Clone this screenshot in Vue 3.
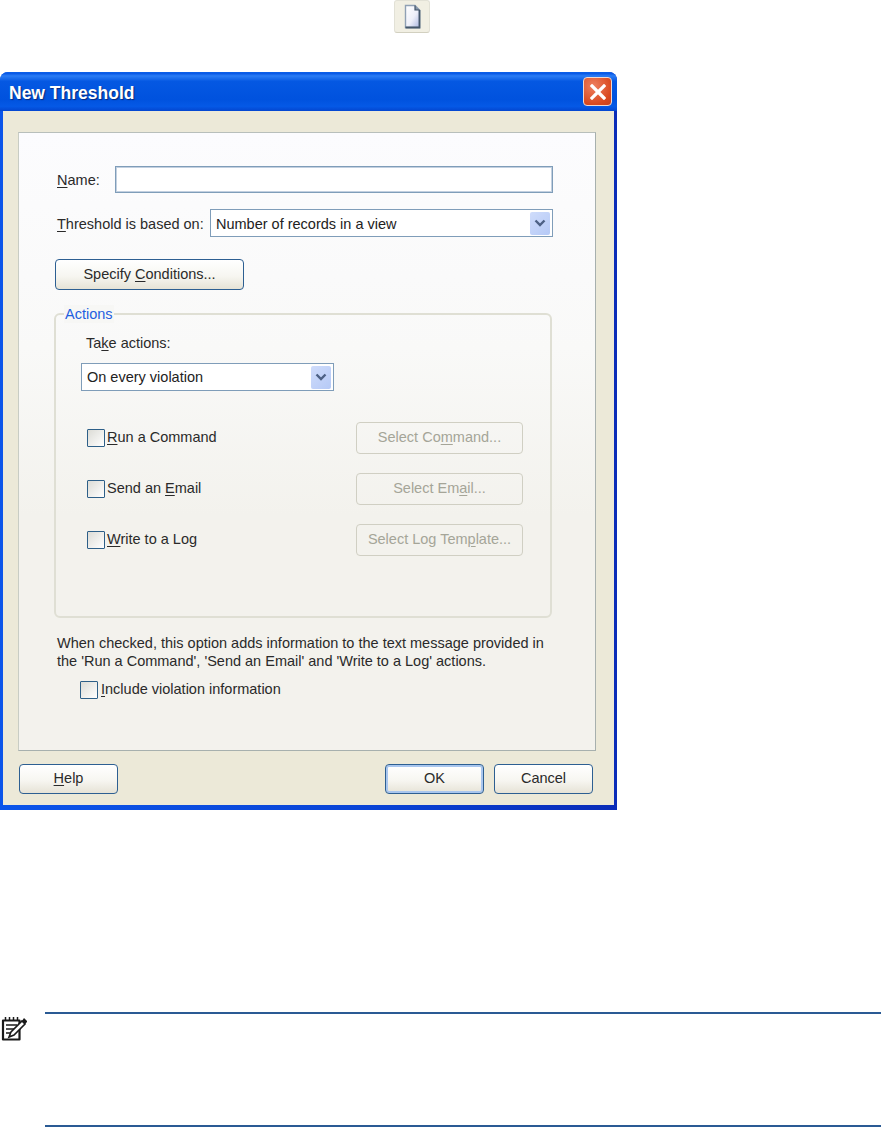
<script setup>
const actions = [
  { pre: '', key: 'R', post: 'un a Command', b: ['Select Co', 'm', 'mand...'] },
  { pre: 'Send an ', key: 'E', post: 'mail', b: ['Select Em', 'a', 'il...'] },
  { pre: '', key: 'W', post: 'rite to a Log', b: ['Select Log Tem', 'p', 'late...'] }
]
</script>

<template>
  <div class="page">
    <div class="toolbtn">
      <svg width="17" height="25" viewBox="0 0 17 25">
        <defs>
          <linearGradient id="doc" x1="0" y1="0" x2="1" y2="1">
            <stop offset="0" stop-color="#ffffff" />
            <stop offset="0.55" stop-color="#eef0fa" />
            <stop offset="1" stop-color="#aab6e0" />
          </linearGradient>
        </defs>
        <path d="M1.5 1.5H11L15.5 6V23.5H1.5Z" fill="url(#doc)" stroke="#8fa0b4" stroke-width="1.4" />
        <path d="M15.5 6V23.5H1.5" fill="none" stroke="#43566b" stroke-width="1.8" />
        <path d="M11 1.5V6H15.5" fill="#8595a8" stroke="#43566b" stroke-width="1.2" />
      </svg>
    </div>

    <section class="win">
      <header class="title">
        <span class="title-text">New Threshold</span>
        <div class="close">
          <svg width="16" height="16" viewBox="0 0 16 16">
            <path d="M2 2L14 14M14 2L2 14" stroke="#fff" stroke-width="3.2" stroke-linecap="square" />
          </svg>
        </div>
      </header>

      <div class="body">
        <div class="panel">
          <div class="row name-row">
            <label class="lbl"><u>N</u>ame:</label>
            <input class="field name-field" type="text" />
          </div>
          <div class="row based-row">
            <label class="lbl"><u>T</u>hreshold is based on:</label>
            <div class="field combo grow">
              <span class="combo-text">Number of records in a view</span>
              <span class="arrow">
                <svg width="12" height="8" viewBox="0 0 12 8"><path d="M1.5 1.5L6 6L10.5 1.5" fill="none" stroke="#4d6185" stroke-width="2.4" /></svg>
              </span>
            </div>
          </div>
          <button class="btn specify" type="button">Specify <u>C</u>onditions...</button>

          <div class="group">
            <span class="legend">Actions</span>
            <div class="take"><span>Ta<u>k</u>e actions:</span></div>
            <div class="field combo take-combo">
              <span>On every violation</span>
              <span class="arrow">
                <svg width="12" height="8" viewBox="0 0 12 8"><path d="M1.5 1.5L6 6L10.5 1.5" fill="none" stroke="#4d6185" stroke-width="2.4" /></svg>
              </span>
            </div>
            <div class="action-list">
              <div v-for="a in actions" :key="a.key" class="action">
                <span class="check"></span>
                <span class="check-label">{{ a.pre }}<u>{{ a.key }}</u>{{ a.post }}</span>
                <button class="btn disabled" type="button" disabled>{{ a.b[0] }}<u>{{ a.b[1] }}</u>{{ a.b[2] }}</button>
              </div>
            </div>
          </div>

          <p class="hint">When checked, this option adds information to the text message provided in<br />the 'Run a Command', 'Send an Email' and 'Write to a Log' actions.</p>
          <div class="include">
            <span class="check"></span>
            <span class="check-label"><u>I</u>nclude violation information</span>
          </div>
        </div>

        <footer class="foot">
          <button class="btn foot-btn" type="button"><u>H</u>elp</button>
          <div class="foot-right">
            <button class="btn foot-btn default" type="button">OK</button>
            <button class="btn foot-btn" type="button">Cancel</button>
          </div>
        </footer>
      </div>
    </section>

    <div class="note">
      <svg class="note-icon" width="26" height="26" viewBox="0 0 26 26">
        <path d="M2 5.5H18.5V24.5H2Z" fill="#fff" stroke="#1a1a1a" stroke-width="2.2" stroke-linejoin="round" />
        <path d="M4.5 2V6M8.5 2V6M12.5 2V6M16.5 2V6" stroke="#1a1a1a" stroke-width="1.5" />
        <path d="M5 10H16M5 14H14M5 18H10" stroke="#1a1a1a" stroke-width="1.6" />
        <path d="M8 22L10 17L21 6L24 9L13 20Z" fill="#fff" stroke="#1a1a1a" stroke-width="1.6" />
        <path d="M21 6L23 3L26.5 6.5L24 9Z" fill="#1a1a1a" />
      </svg>
      <div class="note-box"></div>
    </div>
  </div>
</template>

<style scoped>
.page {
  width: 881px;
  height: 1127px;
  overflow: hidden;
  background: #fff;
  font-family: "Liberation Sans", Arial, sans-serif;
  font-size: 14.5px;
  color: #2a2a2a;
}
u { text-underline-offset: 2px; }

.toolbtn {
  width: 36px;
  height: 33px;
  margin-left: 394px;
  box-sizing: border-box;
  border: 1px solid #e2e1d6;
  border-bottom-color: #d2d0c0;
  border-radius: 3px;
  background: #f1efe3;
  display: flex;
  align-items: center;
  justify-content: center;
}

.win {
  width: 617px;
  height: 738px;
  margin-top: 39px;
  border-radius: 8px 8px 0 0;
  overflow: hidden;
  background: linear-gradient(90deg, #0b55ea 0, #0a44d6 60%, #0a2cb8 100%);
  display: flex;
  flex-direction: column;
}
.title {
  height: 39px;
  flex: none;
  display: flex;
  align-items: center;
  justify-content: space-between;
  padding: 0 5px 0 9px;
  background: linear-gradient(#0a5fe8 0, #0a5ae6 4%, #2a7cf5 10%, #0558e2 24%, #0052de 70%, #0559e6 88%, #0346d0 100%);
}
.title-text {
  color: #fff;
  font-weight: 700;
  font-size: 17.5px;
  padding-top: 3px;
  text-shadow: 1px 1px 1px #0a2a7a;
}
.close {
  width: 29px;
  height: 29px;
  box-sizing: border-box;
  border: 1px solid #f0d8d0;
  border-radius: 4px;
  background: radial-gradient(circle at 35% 30%, #ee8060, #d9491f 70%, #c6401e);
  display: flex;
  align-items: center;
  justify-content: center;
}

.body {
  flex: 1;
  margin: 0 3px 5px;
  padding: 21px 18px 0 15px;
  background: #ece9d8;
  display: flex;
  flex-direction: column;
}
.panel {
  height: 619px;
  flex: none;
  box-sizing: border-box;
  padding: 33px 42px 0 35px;
  border: 1px solid #a7b0ae;
  border-left-color: #c8ccc4;
  border-top-color: #b8bfbb;
  background: linear-gradient(#fcfcfe 0, #f9f9f8 35%, #f3f2ed 62%, #f3f2ed 100%);
}
.row { display: flex; align-items: center; padding-left: 3px; }
.name-row { height: 27px; }
.based-row { height: 28px; margin-top: 16px; }
.lbl { white-space: nowrap; }
.name-row .lbl { width: 58px; flex: none; }
.based-row .lbl { width: 153px; flex: none; padding-top: 2px; }
.field {
  box-sizing: border-box;
  border: 1px solid #7f9db9;
  background: #fff;
  outline: 1px solid #c3d0e0;
  outline-offset: -2px;
  color: #222;
  font: inherit;
}
.name-field { flex: 1; height: 27px; min-width: 0; }
.combo {
  display: flex;
  align-items: center;
  justify-content: space-between;
  height: 28px;
  padding-left: 5px;
  outline: none;
}
.combo-text { padding-top: 2px; }
.grow { flex: 1; }
.arrow {
  width: 20px;
  height: 23px;
  margin-right: 2px;
  border-radius: 2px;
  background: linear-gradient(135deg, #cfdcfb, #b5c9f6);
  display: flex;
  align-items: center;
  justify-content: center;
}
.btn {
  box-sizing: border-box;
  border: 1.5px solid #2d5f92;
  border-radius: 4px;
  background: linear-gradient(#ffffff 0, #f7f6f1 55%, #e6e3d6 100%);
  font: inherit;
  color: #2a2a2a;
  padding: 0 0 2px;
}
.specify { display: block; width: 189px; height: 31px; margin: 22px 0 0 1px; }

.group {
  position: relative;
  width: 498px;
  height: 305px;
  box-sizing: border-box;
  margin-top: 23px;
  border: 2px solid #dfdfd4;
  border-radius: 6px;
  padding: 14px 0 0 25px;
}
.legend {
  position: absolute;
  left: 8px;
  top: -10px;
  padding: 0 1px;
  color: #1f5fe0;
  line-height: 18px;
  background: #f7f7f5;
}
.take { padding-left: 5px; height: 27px; display: flex; align-items: center; }
.take-combo { width: 253px; margin-top: 7px; }
.action-list {
  margin-top: 31px;
  padding-right: 27px;
  display: flex;
  flex-direction: column;
  gap: 19px;
}
.action { display: flex; align-items: center; height: 32px; padding-left: 6px; }
.action .btn { margin-left: auto; }
.check {
  width: 18px;
  height: 18px;
  flex: none;
  box-sizing: border-box;
  border: 1.5px solid #2d5f88;
  border-radius: 1px;
  background: linear-gradient(135deg, #dcdcd6, #ffffff);
}
.check-label { margin-left: 2px; white-space: nowrap; padding-bottom: 2px; }
.disabled {
  width: 167px;
  height: 32px;
  border-color: #d0cfc3;
  background: transparent;
  color: #a5a598;
}

.hint { margin: 16px 0 0 3px; line-height: 18px; white-space: nowrap; }
.include { display: flex; align-items: center; height: 18px; margin: 11px 0 0 26px; }
.include .check-label { margin-left: 3px; }

.foot {
  display: flex;
  justify-content: space-between;
  padding: 13px 3px 0 1px;
}
.foot-right { display: flex; gap: 10px; }
.foot-btn { width: 99px; height: 30px; }
.default {
  box-shadow: inset 0 0 0 2px #a9c6ee;
}

.note {
  position: relative;
  margin-top: 202px;
  margin-left: 45px;
  height: 114px;
}
.note-box {
  box-sizing: border-box;
  height: 115px;
  border-top: 2px solid #2a5a94;
  border-bottom: 2px solid #2a5a94;
}
.note-icon { position: absolute; left: -44px; top: 3px; }
</style>
